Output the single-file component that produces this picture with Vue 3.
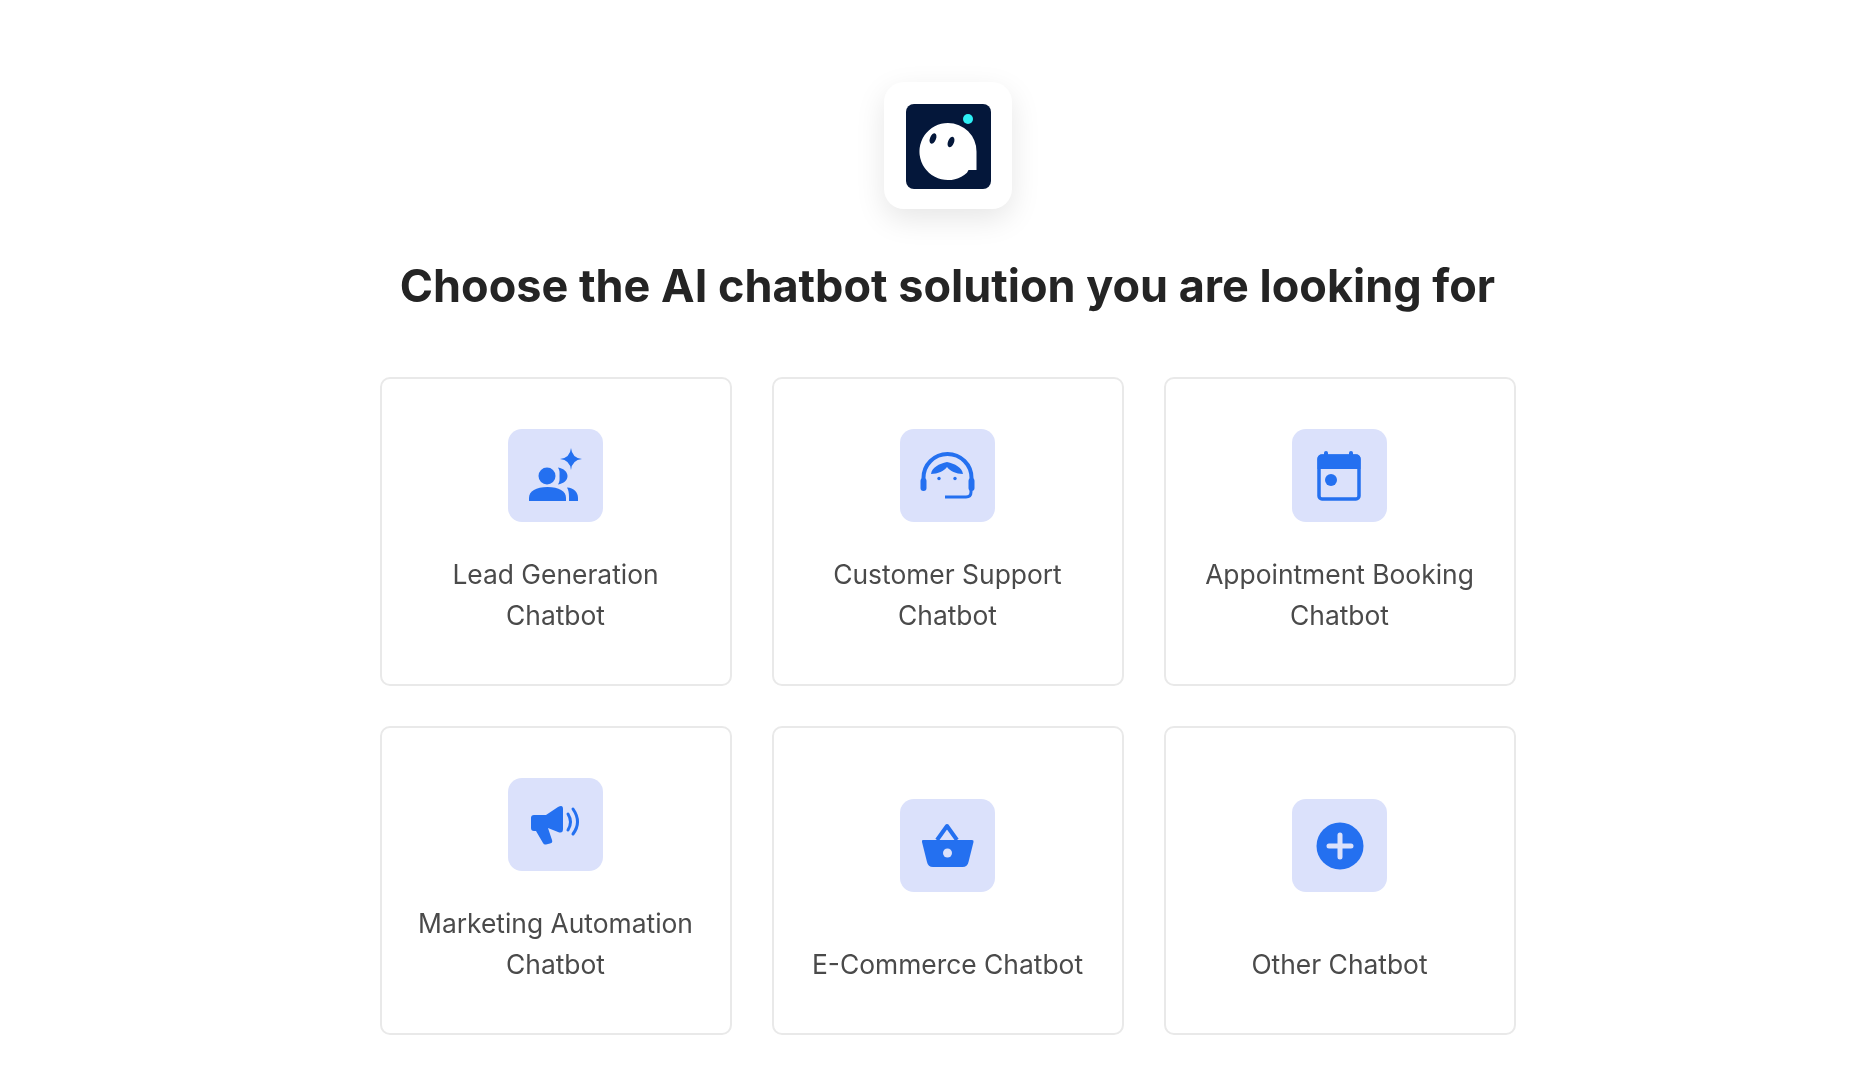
<script setup>
const items = [
  { id: 'lead', lines: ['Lead Generation', 'Chatbot'] },
  { id: 'support', lines: ['Customer Support', 'Chatbot'] },
  { id: 'booking', lines: ['Appointment Booking', 'Chatbot'] },
  { id: 'marketing', lines: ['Marketing Automation', 'Chatbot'] },
  { id: 'shop', lines: ['E-Commerce Chatbot'] },
  { id: 'other', lines: ['Other Chatbot'] },
]
</script>

<template>
  <div class="page">
    <div class="logo-tile">
      <svg class="logo" viewBox="0 0 85 85">
        <rect width="85" height="85" rx="8" fill="#04173a" />
        <path d="M42 19A28.500 28.500 0 0 1 70.500 47.500V66H62.500L61 68.700A28.500 28.500 0 1 1 42 19Z" fill="#fff" />
        <ellipse cx="27" cy="34.500" rx="3" ry="5.500" transform="rotate(22 27 34.500)" fill="#04173a" />
        <ellipse cx="45" cy="38" rx="3" ry="5.500" transform="rotate(22 45 38)" fill="#04173a" />
        <circle cx="62" cy="15" r="5" fill="#2ef0f5" />
      </svg>
    </div>

    <h1 class="title">Choose the AI chatbot solution you are looking for</h1>

    <div class="grid">
      <div v-for="item in items" :key="item.id" class="card">
        <div class="tile">
          <svg viewBox="0 0 95 93" class="icon">
            <g v-if="item.id === 'lead'" fill="#2470f0">
              <path d="M63 19Q64 29 74 30Q64 31 63 41Q62 31 52 30Q62 29 63 19Z" />
              <circle cx="39" cy="47" r="8.500" />
              <path d="M21 72V69C21 62 28 58 39.500 58C51 58 58 62 58 69V72Z" />
              <path d="M50 38.500C56 39.500 59.500 43 59.500 47C59.500 51 56 54.500 50 55.500C52 52.500 51.500 50 51.500 47C51.500 44 52 41.500 50 38.500Z" />
              <path d="M59 58.500C66 59 70 63 70 69V72H61V68C61 64 60.500 61 59 58.500Z" />
            </g>
            <g v-else-if="item.id === 'support'">
              <path d="M23.500 54V49A24 24 0 0 1 71.500 49V54" fill="none" stroke="#2470f0" stroke-width="4" />
              <rect x="20.500" y="49" width="6" height="13" rx="3" fill="#2470f0" />
              <rect x="68.500" y="49" width="6" height="13" rx="3" fill="#2470f0" />
              <path d="M71 60V63Q71 68 66 68H45" fill="none" stroke="#2470f0" stroke-width="3" />
              <path d="M31 45C32 38 39 35 47 33C55 35 62 38 63 45C56 45 50 42 47 38C44 42 38 45 31 45Z" fill="#2470f0" />
              <circle cx="39" cy="49.500" r="1.700" fill="#2470f0" />
              <circle cx="55" cy="49.500" r="1.700" fill="#2470f0" />
            </g>
            <g v-else-if="item.id === 'booking'" fill="#2470f0">
              <rect x="27" y="27" width="40" height="43" rx="3" fill="none" stroke="#2470f0" stroke-width="3.500" />
              <path d="M25.500 30Q25.500 25.500 30 25.500H64Q68.500 25.500 68.500 30V40H25.500Z" />
              <rect x="32" y="22" width="4" height="6" rx="2" />
              <rect x="57" y="22" width="4" height="6" rx="2" />
              <circle cx="39" cy="51" r="6" />
            </g>
            <g v-else-if="item.id === 'marketing'">
              <path d="M26 37H38L50 29Q55 26 55 31V51Q55 56 50 54L40 50L44 62Q45 65 42 65.500L38 66.500Q36 67 35 65L28 53H26Q23 53 23 50V40Q23 37 26 37Z" fill="#2470f0" />
              <path d="M60 36Q65 44 60 52" fill="none" stroke="#2470f0" stroke-width="3" stroke-linecap="round" />
              <path d="M65 31Q74 44 65 56" fill="none" stroke="#2470f0" stroke-width="3" stroke-linecap="round" />
            </g>
            <g v-else-if="item.id === 'shop'">
              <path d="M37 41L47 27L57 41" fill="none" stroke="#2470f0" stroke-width="4" stroke-linejoin="round" />
              <path d="M23 41H72Q74 41 73.500 43L68.500 63Q67.500 68 62.500 68H33Q28 68 27 63L22 43Q21.500 41 23 41Z" fill="#2470f0" />
              <circle cx="47.500" cy="54" r="4.500" fill="#dbe1fb" />
            </g>
            <g v-else>
              <circle cx="48" cy="47" r="23.500" fill="#2470f0" />
              <path d="M37 47H59M48 36V58" stroke="#dbe1fb" stroke-width="5" stroke-linecap="round" />
            </g>
          </svg>
        </div>
        <div class="label" :class="{ single: item.lines.length === 1 }">
          <div v-for="line in item.lines" :key="line">{{ line }}</div>
        </div>
      </div>
    </div>
  </div>
</template>

<style scoped>
.page {
  width: 1866px;
  height: 1080px;
  box-sizing: border-box;
  padding: 82px 0 0 29px;
  display: flex;
  flex-direction: column;
  align-items: center;
  background: #fff;
  font-family: Inter, "Noto Sans", sans-serif;
  overflow: hidden;
  filter: blur(0.6px);
}

.logo-tile {
  width: 128px;
  height: 127px;
  box-sizing: border-box;
  padding: 2px 0 0 2px;
  border-radius: 20px;
  background: #fff;
  box-shadow: 0 10px 30px rgba(0, 0, 0, 0.1);
  display: flex;
  align-items: center;
  justify-content: center;
}

.logo {
  width: 85px;
  height: 85px;
  display: block;
}

.title {
  margin: 49px 0 0;
  font-size: 45px;
  line-height: 56px;
  font-weight: 700;
  color: #242424;
}

.grid {
  margin-top: 63px;
  display: grid;
  grid-template-columns: repeat(3, 352px);
  grid-auto-rows: 309px;
  gap: 39.500px 40px;
}

.card {
  box-sizing: border-box;
  border: 2px solid #e9e9e9;
  border-radius: 10px;
  padding-bottom: 48px;
  display: flex;
  flex-direction: column;
  align-items: center;
  justify-content: flex-end;
}

.tile {
  width: 95px;
  height: 93px;
  border-radius: 14px;
  background: #dbe1fb;
}

.icon {
  width: 95px;
  height: 93px;
  display: block;
}

.label {
  margin-top: 32px;
  font-size: 26.400px;
  line-height: 41px;
  color: #4a4a4a;
  text-align: center;
}

.label.single {
  margin-top: 52px;
}
</style>
